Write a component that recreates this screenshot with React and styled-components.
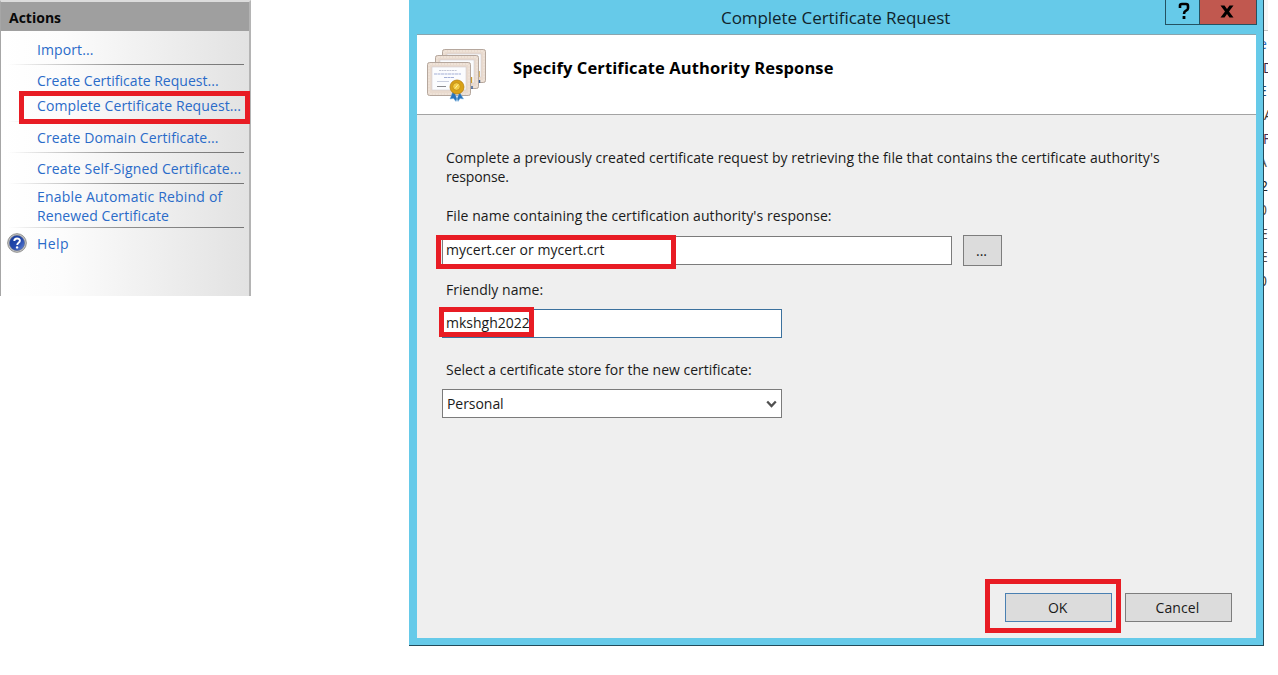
import React from "react";
import styled, { createGlobalStyle } from "styled-components";

const GlobalStyle = createGlobalStyle`
  * { box-sizing: border-box; }
  body {
    margin: 0;
    background: #fff;
    overflow: hidden;
    font-family: "Open Sans", "Noto Sans", sans-serif;
    font-size: 14px;
    color: #1a1a1a;
  }
`;

const Page = styled.main`
  display: flex;
  align-items: flex-start;
  width: 1278px;
  height: 675px;
`;

const Label = styled.span`
  white-space: nowrap;
  letter-spacing: ${(p) => p.$track || 0}px;
`;

const Highlight = styled.div`
  position: absolute;
  border: 5px solid #e81c24;
  pointer-events: none;
  left: ${(p) => p.$left}px;
  top: ${(p) => p.$top}px;
  width: ${(p) => p.$width}px;
  height: ${(p) => p.$height}px;
`;

const ActionsPanel = styled.aside`
  width: 251px;
  height: 296px;
  margin-right: 158px;
  border-top: 2px solid #dcdcdc;
  border-right: 2px solid #b4b4b4;
  border-left: 1px solid #a6a6a6;
  background: linear-gradient(90deg, #fff 0%, #fcfcfc 25%, #e2e2e2 100%);
`;

const ActionsHeader = styled.header`
  display: flex;
  align-items: center;
  height: 29px;
  padding-left: 8px;
  padding-top: 1px;
  background: #9f9f9f;
  color: #080808;
  font-weight: 700;
  font-size: 14px;
`;

const ActionGroup = styled.div`
  position: relative;
  display: flex;
  flex-direction: column;
  justify-content: center;
  height: ${(p) => p.$height}px;
`;

const ActionItem = styled.a`
  display: flex;
  align-items: center;
  height: ${(p) => p.$height || 25}px;
  padding-top: ${(p) => p.$drop || 0}px;
  padding-left: 36px;
  color: #2a6bc9;
  position: relative;
`;

const Separator = styled.div`
  height: 1px;
  margin: 0 5px 0 7px;
  background: linear-gradient(90deg, transparent, #8d8d8d 50%, #767676);
`;

const HelpBadge = styled.svg`
  position: absolute;
  left: 6px;
  top: 2px;
`;

const Dialog = styled.section`
  width: 855px;
  height: 646px;
  display: flex;
  flex-direction: column;
  background: #66cae9;
  padding: 0 7px 7px 8px;
  border-right: 1px solid #234a59;
  border-bottom: 1px solid #234a59;
`;

const TitleBar = styled.header`
  display: flex;
  align-items: flex-start;
  height: 34px;
  margin-right: -1px;
`;

const Title = styled.h1`
  flex: 1;
  margin: 0;
  padding: 5px 0 0 304px;
  font-size: 17px;
  line-height: 25px;
  font-weight: 400;
  color: #10242c;
`;

const CaptionButton = styled.div`
  display: flex;
  justify-content: center;
  align-items: center;
  width: ${(p) => p.$width}px;
  height: 25px;
  padding: ${(p) => (p.$danger ? "0 2px 2px 0" : "0 0 2px 3px")};
  border: 1px solid #245262;
  border-top: 0;
  margin-left: ${(p) => (p.$danger ? -1 : 0)}px;
  background: ${(p) => (p.$danger ? "#c1584f" : "#66cae9")};
  color: #000;
`;

const Banner = styled.div`
  display: flex;
  align-items: flex-start;
  height: 81px;
  padding-left: 10px;
  border-top: 1px solid #8aa5ae;
  border-bottom: 1px solid #a3a3a3;
  background: #fff;
`;

const BannerTitle = styled.h2`
  margin: 20px 0 0 25px;
  font-size: 16.5px;
  line-height: 26px;
  font-weight: 700;
  color: #000;
`;

const CertIcon = styled.svg`
  margin-top: 14px;
`;

const Content = styled.div`
  flex: 1;
  display: flex;
  flex-direction: column;
  padding: 33px 24px 16px 25px;
  background: #efefef;
`;

const Intro = styled.p`
  margin: 0 0 0 4px;
  line-height: 19px;
`;

const FieldLabel = styled.label`
  margin: ${(p) => p.$gap}px 0 0 4px;
  line-height: 20px;
`;

const FieldRow = styled.div`
  position: relative;
  display: flex;
  align-items: center;
  gap: 11px;
  margin-top: ${(p) => p.$gap}px;
`;

const Field = styled.div`
  display: flex;
  align-items: center;
  justify-content: space-between;
  width: ${(p) => p.$width}px;
  height: 29px;
  padding: ${(p) => (p.$select ? "0 4px 1px 4px" : "0 5px 3px 3px")};
  border: 1px solid ${(p) => (p.$focused ? "#3b719e" : "#7b7b7b")};
  background: #fff;
`;

const Button = styled.div`
  display: flex;
  align-items: center;
  justify-content: center;
  width: ${(p) => p.$width}px;
  height: ${(p) => p.$height || 29}px;
  padding-right: 2px;
  border: 1px solid ${(p) => (p.$primary ? "#4a80b2" : "#7d7d7d")};
  background: #dcdcdc;
`;

const Footer = styled.footer`
  position: relative;
  display: flex;
  justify-content: flex-end;
  gap: 13px;
  margin-top: auto;
`;

const BackWindow = styled.div`
  width: 4px;
  height: 290px;
  padding-top: 30px;
  overflow: hidden;
  background: linear-gradient(#f6f6f6 30px, #c4c4c4 30px, #c4c4c4 31px, #fff 31px);
`;

const BackLine = styled.div`
  height: 23.7px;
  line-height: 27px;
  margin-left: ${(p) => p.$shift}px;
  color: ${(p) => p.$color};
`;

const backRows = [
  ["e", "#2b6cc4", -5],
  ["D", "#3c2342", -1],
  ["E", "#214a76", -5],
  ["A", "#3d3332", 0],
  ["F", "#4a2a50", -1],
  ["A", "#5c5348", -6],
  ["2", "#222", -4],
  ["0", "#5a4a33", -5],
  ["E", "#5a4a43", -4],
  ["E", "#5a4a43", -4],
  ["0", "#3d3a33", -5],
];

function Certificate({ x, y }) {
  return (
    <g transform={`translate(${x} ${y})`}>
      <rect x="0.5" y="0.5" width="43" height="33" rx="2" fill="#e9dace" stroke="#b5a79d" />
      <rect x="2" y="2" width="40" height="30" rx="1" fill="none" stroke="#f4ebe2" strokeDasharray="2 1" />
      <rect x="5" y="5" width="34" height="23" fill="#fbfcfe" stroke="#d2cbd0" strokeWidth="0.6" />
    </g>
  );
}

function CertificatesIcon() {
  return (
    <CertIcon width="61" height="54" viewBox="0 0 61 54">
      <Certificate x={15} y={0} />
      <path d="M52 22v6" stroke="#ca9930" strokeWidth="1.4" />
      <Certificate x={8} y={6} />
      <path d="M44.500 28v6" stroke="#ca9930" strokeWidth="1.4" />
      <path d="M45 37v3M52.500 31v3" stroke="#315a96" strokeWidth="1.4" />
      <Certificate x={0} y={13} />
      <path d="M12 21.500h18" stroke="#c3c6d4" strokeDasharray="2 .6" />
      <path d="M7 25h27M17 28.500h10" stroke="#a3afd6" strokeDasharray="3 .5" />
      <path d="M10 32.500h12" stroke="#c9cede" />
      <path d="M10 37.500h9" stroke="#8a8a8e" />
      <path d="M26 42l-3 8 3.500-.5 2.500 3 3-8zM32 42l4.500 8-3.500-.5-2 3-3-8z" fill="#2873bd" stroke="#7fb4df" strokeWidth="0.5" />
      <circle cx="30" cy="38" r="7" fill="#d9a217" stroke="#b78212" strokeWidth="0.8" />
      <circle cx="29.5" cy="37.5" r="3.8" fill="#f3cc44" stroke="#c08d17" strokeWidth="0.8" />
      <path d="M28 39.500l3-4" stroke="#fff0a0" />
    </CertIcon>
  );
}

function HelpIcon() {
  return (
    <HelpBadge width="20" height="20" viewBox="0 0 20 20">
      <defs>
        <linearGradient id="helpFill" x1="0" y1="0" x2="1" y2="1">
          <stop offset="0" stopColor="#143a9b" />
          <stop offset="0.55" stopColor="#2449ad" />
          <stop offset="1" stopColor="#6a8bdc" />
        </linearGradient>
      </defs>
      <circle cx="10" cy="10" r="9.3" fill="#c9c9c7" stroke="#8c8c8c" strokeWidth="1" />
      <circle cx="10" cy="10" r="7.6" fill="url(#helpFill)" stroke="#54628a" strokeWidth="0.6" />
      <path d="M7.3 8.1c0-3.6 5.6-3.4 5.6-.3 0 2.1-2.7 2-2.7 4.2" fill="none" stroke="#fff" strokeWidth="1.9" />
      <circle cx="10.1" cy="14.4" r="1.2" fill="#fff" />
    </HelpBadge>
  );
}

export default function App() {
  return (
    <Page>
      <GlobalStyle />
      <ActionsPanel>
        <ActionsHeader><Label>Actions</Label></ActionsHeader>
        <ActionGroup $height={33}>
          <ActionItem $height={33} $drop={4}><Label $track={0.1}>Import...</Label></ActionItem>
        </ActionGroup>
        <Separator />
        <ActionGroup $height={56}>
          <ActionItem><Label $track={0.02}>Create Certificate Request...</Label></ActionItem>
          <ActionItem><Label $track={0.1}>Complete Certificate Request...</Label></ActionItem>
          <Highlight $left={18} $top={26} $width={231} $height={33} />
        </ActionGroup>
        <Separator />
        <ActionGroup $height={30}>
          <ActionItem><Label $track={0.08}>Create Domain Certificate...</Label></ActionItem>
        </ActionGroup>
        <Separator />
        <ActionGroup $height={30}>
          <ActionItem><Label $track={0.13}>Create Self-Signed Certificate...</Label></ActionItem>
        </ActionGroup>
        <Separator />
        <ActionGroup $height={43}>
          <ActionItem $height={19}><Label $track={0.18}>Enable Automatic Rebind of</Label></ActionItem>
          <ActionItem $height={19}><Label $track={0.08}>Renewed Certificate</Label></ActionItem>
        </ActionGroup>
        <Separator />
        <ActionGroup $height={31}>
          <ActionItem><HelpIcon /><Label $track={0.4}>Help</Label></ActionItem>
        </ActionGroup>
      </ActionsPanel>

      <Dialog>
        <TitleBar>
          <Title><Label $track={-0.05}>Complete Certificate Request</Label></Title>
          <CaptionButton $width={35}>
            <svg width="12" height="18" viewBox="0 0 12 18">
              <path d="M2 6V3.5Q2 2 4 2h4q2 0 2 2v2.2Q10 7.500 8 8.700 6 9.700 6 12" fill="none" stroke="#000" strokeWidth="2.6" />
              <path d="M4.600 14h2.800v3H4.600z" />
            </svg>
          </CaptionButton>
          <CaptionButton $width={58} $danger>
            <svg width="14" height="13" viewBox="0 0 14 13">
              <path d="M.5.5H4.500L7 4 9.500.5h4L9 6.500l4.500 6h-4L7 9l-2.500 3.500h-4L5 6.500z" />
            </svg>
          </CaptionButton>
        </TitleBar>
        <Banner>
          <CertificatesIcon />
          <BannerTitle><Label $track={0.12}>Specify Certificate Authority Response</Label></BannerTitle>
        </Banner>
        <Content>
          <Intro>
            <Label $track={0.045}>Complete a previously created certificate request by retrieving the file that contains the certificate authority's</Label>
            <br />
            <Label $track={-0.15}>response.</Label>
          </Intro>
          <FieldLabel $gap={20}><Label $track={0.07}>File name containing the certification authority's response:</Label></FieldLabel>
          <FieldRow $gap={9}>
            <Field $width={510}><Label $track={0.06}>mycert.cer or mycert.crt</Label></Field>
            <Button $width={39} $height={31}>...</Button>
            <Highlight $left={-6} $top={0} $width={240} $height={34} />
          </FieldRow>
          <FieldLabel $gap={14}><Label $track={0.04}>Friendly name:</Label></FieldLabel>
          <FieldRow $gap={9}>
            <Field $width={340} $focused><Label>mkshgh2022</Label></Field>
            <Highlight $left={-3} $top={-2} $width={95} $height={30} />
          </FieldRow>
          <FieldLabel $gap={22}><Label>Select a certificate store for the new certificate:</Label></FieldLabel>
          <FieldRow $gap={9}>
            <Field $width={340} $select>
              <Label $track={-0.05}>Personal</Label>
              <svg width="11" height="9" viewBox="0 0 11 9">
                <path d="M1.200 2.500 5.500 7 9.800 2.500" fill="none" stroke="#505050" strokeWidth="2.300" />
              </svg>
            </Field>
          </FieldRow>
          <Footer>
            <Button $width={107} $primary><Label $track={-0.2}>OK</Label></Button>
            <Button $width={107}><Label $track={0.1}>Cancel</Label></Button>
            <Highlight $left={543} $top={-14} $width={136} $height={54} />
          </Footer>
        </Content>
      </Dialog>

      <BackWindow>
        {backRows.map(([text, color, shift], i) => (
          <BackLine key={i} $color={color} $shift={shift}>{text}</BackLine>
        ))}
      </BackWindow>
    </Page>
  );
}
